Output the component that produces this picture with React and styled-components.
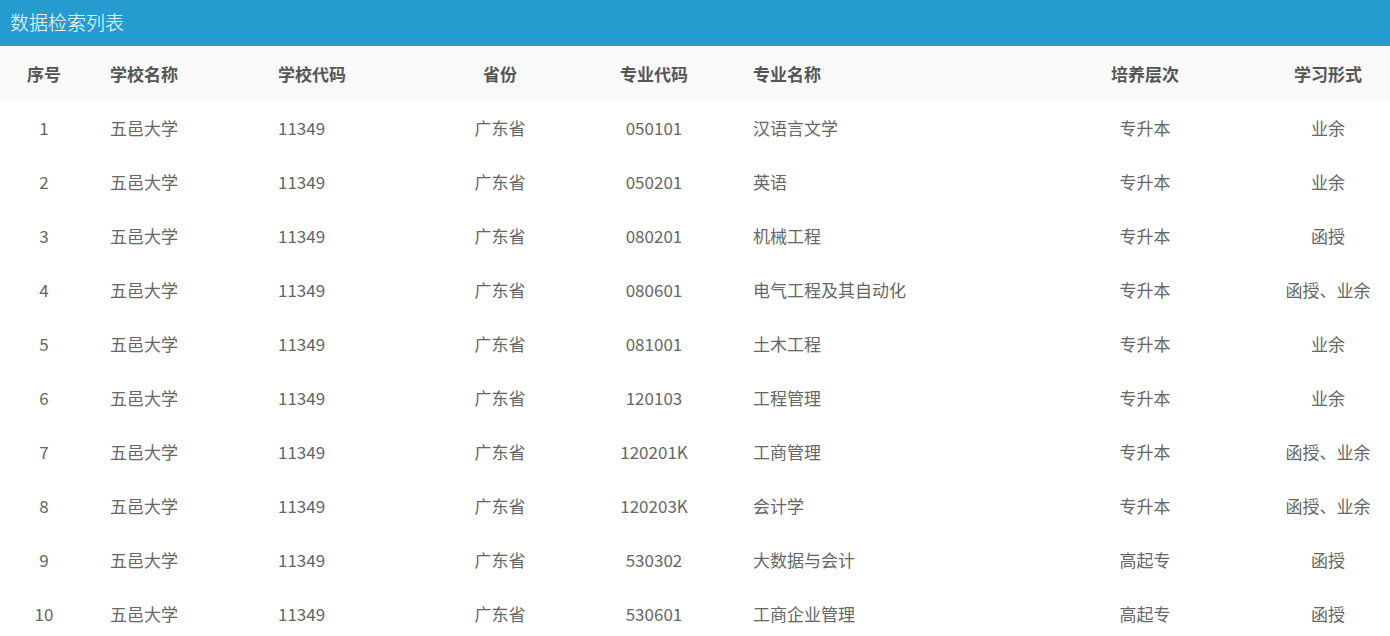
import React from 'react'
import styled, { createGlobalStyle } from 'styled-components'

const GlobalStyle = createGlobalStyle`
  html, body {
    margin: 0;
    padding: 0;
    background: #fff;
    font-family: "Noto Sans CJK SC", "Noto Sans", sans-serif;
  }
`

// width, align, padding-left
const columns = [
  { key: 'no', title: '序号', width: 88, align: 'center' },
  { key: 'school', title: '学校名称', width: 178, align: 'left', pad: 22 },
  { key: 'code', title: '学校代码', width: 158, align: 'left', pad: 12 },
  { key: 'prov', title: '省份', width: 152, align: 'center' },
  { key: 'major', title: '专业代码', width: 156, align: 'center' },
  { key: 'name', title: '专业名称', width: 292, align: 'left', pad: 21 },
  { key: 'level', title: '培养层次', width: 242, align: 'center' },
  { key: 'form', title: '学习形式', width: 124, align: 'center' },
]

const rows = [
  ['1', '五邑大学', '11349', '广东省', '050101', '汉语言文学', '专升本', '业余'],
  ['2', '五邑大学', '11349', '广东省', '050201', '英语', '专升本', '业余'],
  ['3', '五邑大学', '11349', '广东省', '080201', '机械工程', '专升本', '函授'],
  ['4', '五邑大学', '11349', '广东省', '080601', '电气工程及其自动化', '专升本', '函授、业余'],
  ['5', '五邑大学', '11349', '广东省', '081001', '土木工程', '专升本', '业余'],
  ['6', '五邑大学', '11349', '广东省', '120103', '工程管理', '专升本', '业余'],
  ['7', '五邑大学', '11349', '广东省', '120201K', '工商管理', '专升本', '函授、业余'],
  ['8', '五邑大学', '11349', '广东省', '120203K', '会计学', '专升本', '函授、业余'],
  ['9', '五邑大学', '11349', '广东省', '530302', '大数据与会计', '高起专', '函授'],
  ['10', '五邑大学', '11349', '广东省', '530601', '工商企业管理', '高起专', '函授'],
]

const gridCols = columns.map(c => `${c.width}px`).join(' ')

export default function App() {
  return (
    <Page>
      <GlobalStyle />
      <TitleBar>数据检索列表</TitleBar>
      <HeadRow>
        {columns.map(c => (
          <Cell key={c.key} align={c.align} pad={c.pad} head>
            {c.title}
          </Cell>
        ))}
      </HeadRow>
      {rows.map(r => (
        <Row key={r[0]}>
          {r.map((v, i) => (
            <Cell key={i} align={columns[i].align} pad={columns[i].pad}>
              {v}
            </Cell>
          ))}
        </Row>
      ))}
    </Page>
  )
}

const Page = styled.div`
  width: 1390px;
  height: 636px;
  overflow: hidden;
`

const TitleBar = styled.div`
  height: 46px;
  background: #269bcf;
  color: #fff;
  font-size: 19px;
  font-weight: 300;
  line-height: 43px;
  padding-left: 10px;
`

const Row = styled.div`
  display: grid;
  grid-template-columns: ${gridCols};
  height: 54px;
  padding-bottom: 2px;
  box-sizing: border-box;
  align-items: center;
`

const HeadRow = styled(Row)`
  margin-top: 1px;
  background: #f9f9f9;
`

const Cell = styled.div`
  text-align: ${p => p.align};
  padding-left: ${p => p.pad || 0}px;
  font-size: 17px;
  font-weight: ${p => (p.head ? 700 : 400)};
  color: ${p => (p.head ? '#555' : '#666')};
  white-space: nowrap;
`
